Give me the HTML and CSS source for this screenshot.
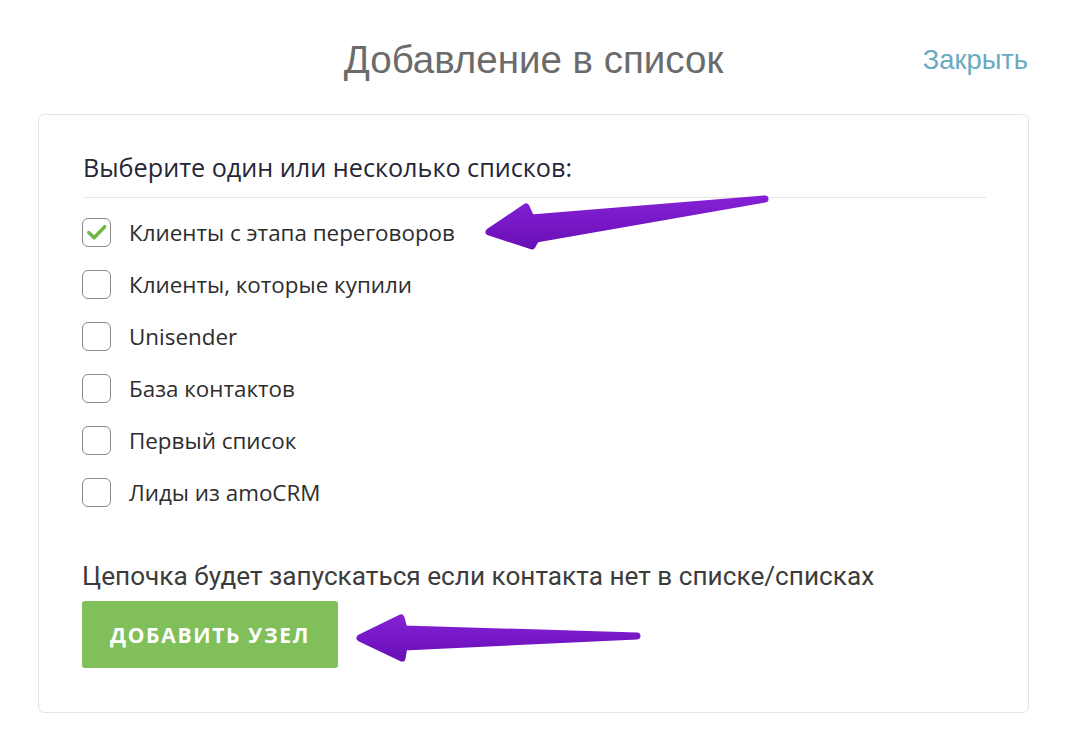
FILE: index.html
```html
<!DOCTYPE html>
<html lang="ru">
<head>
<meta charset="utf-8">
<title>Добавление в список</title>
<link rel="stylesheet" href="styles.css">
</head>
<body>
<div class="page">
  <header class="topbar">
    <span></span>
    <h1 class="title">Добавление в список</h1>
    <a class="close" href="#">Закрыть</a>
  </header>
  <section class="card">
    <div class="card-head">Выберите один или несколько списков:</div>
    <ul class="lists">
      <li class="row"><span class="box checked"><svg viewBox="0 0 28 28" width="28" height="28"><path d="M6 14.5 L11.5 20 L22.5 8.5" fill="none" stroke="#6cb947" stroke-width="3.6" stroke-linecap="round" stroke-linejoin="round"/></svg></span><span class="label">Клиенты с этапа переговоров</span></li>
      <li class="row"><span class="box"></span><span class="label">Клиенты, которые купили</span></li>
      <li class="row"><span class="box"></span><span class="label">Unisender</span></li>
      <li class="row"><span class="box"></span><span class="label">База контактов</span></li>
      <li class="row"><span class="box"></span><span class="label">Первый список</span></li>
      <li class="row"><span class="box"></span><span class="label">Лиды из amoCRM</span></li>
    </ul>
    <p class="note">Цепочка будет запускаться если контакта нет в списке/списках</p>
    <button class="btn" type="button">Добавить узел</button>
  </section>
  <svg class="arrows" width="1070" height="746" viewBox="0 0 1070 746">
    <defs>
      <linearGradient id="ag" x1="0" y1="0" x2="0" y2="1">
        <stop offset="0" stop-color="#8420d4"/>
        <stop offset="1" stop-color="#6a10b8"/>
      </linearGradient>
    </defs>
    <path d="M489,232 L526,207 L531,218 L765,199 L536,239 L532,246 Z" fill="url(#ag)" stroke="url(#ag)" stroke-width="7" stroke-linejoin="round"/>
    <path d="M360,638 L401,618 L404,629 L637,636 L404,647 L402,658 Z" fill="url(#ag)" stroke="url(#ag)" stroke-width="7" stroke-linejoin="round"/>
  </svg>
</div>
</body>
</html>
```
FILE: styles.css
```css
* { box-sizing: border-box; }
html, body { margin: 0; padding: 0; background: #fff; }
body { font-family: "Open Sans", "Liberation Sans", sans-serif; }
.page { position: relative; width: 1070px; height: 746px; padding: 38px 41px 0 38px; }
.topbar {
  display: grid;
  grid-template-columns: 1fr auto 1fr;
  align-items: center;
  height: 44px;
}
.title {
  margin: 0;
  font-family: "Liberation Sans", Arial, sans-serif;
  font-weight: 400;
  font-size: 38.5px;
  line-height: 44px;
  color: #6b6b6b;
}
.close {
  justify-self: end;
  font-family: "Liberation Sans", Arial, sans-serif;
  font-size: 27.3px;
  color: #6aaabf;
  text-decoration: none;
  margin-right: 1px;
}
.card {
  margin-top: 32px;
  border: 1px solid #e4e4e4;
  border-radius: 6px;
  padding: 36px 42px 43px 45px;
  height: 599px;
}
.card-head {
  font-size: 25.2px;
  line-height: 32px;
  color: #262637;
  margin-left: -1px;
  padding-bottom: 14px;
  border-bottom: 1px solid #e6e6e6;
}
.lists { list-style: none; margin: 8px 0 0 0; padding: 0; }
.row { display: flex; align-items: center; height: 52px; }
.box {
  width: 29px; height: 29px;
  border: 1.5px solid #8a8a8a;
  border-radius: 6px;
  margin-left: -2px;
  display: flex; align-items: center; justify-content: center;
  flex: none;
}
.box svg { display: block; }
.label {
  margin-left: 18px;
  font-size: 22.4px;
  color: #2d2d2d;
}
.note {
  margin: 42px 0 0 -2px;
  font-family: Roboto, "Liberation Sans", sans-serif;
  font-size: 26.2px;
  line-height: 32px;
  color: #3c3c3c;
}
.btn {
  margin: 9px 0 0 -2px;
  width: 256px; height: 67px;
  border: 0; border-radius: 3px;
  background: #80bf5a;
  color: #fff;
  font-family: "Open Sans", "Liberation Sans", sans-serif;
  font-weight: 700;
  font-size: 21px;
  letter-spacing: 1.7px;
  text-transform: uppercase;
}
.arrows { position: absolute; left: 0; top: 0; pointer-events: none; }
```
